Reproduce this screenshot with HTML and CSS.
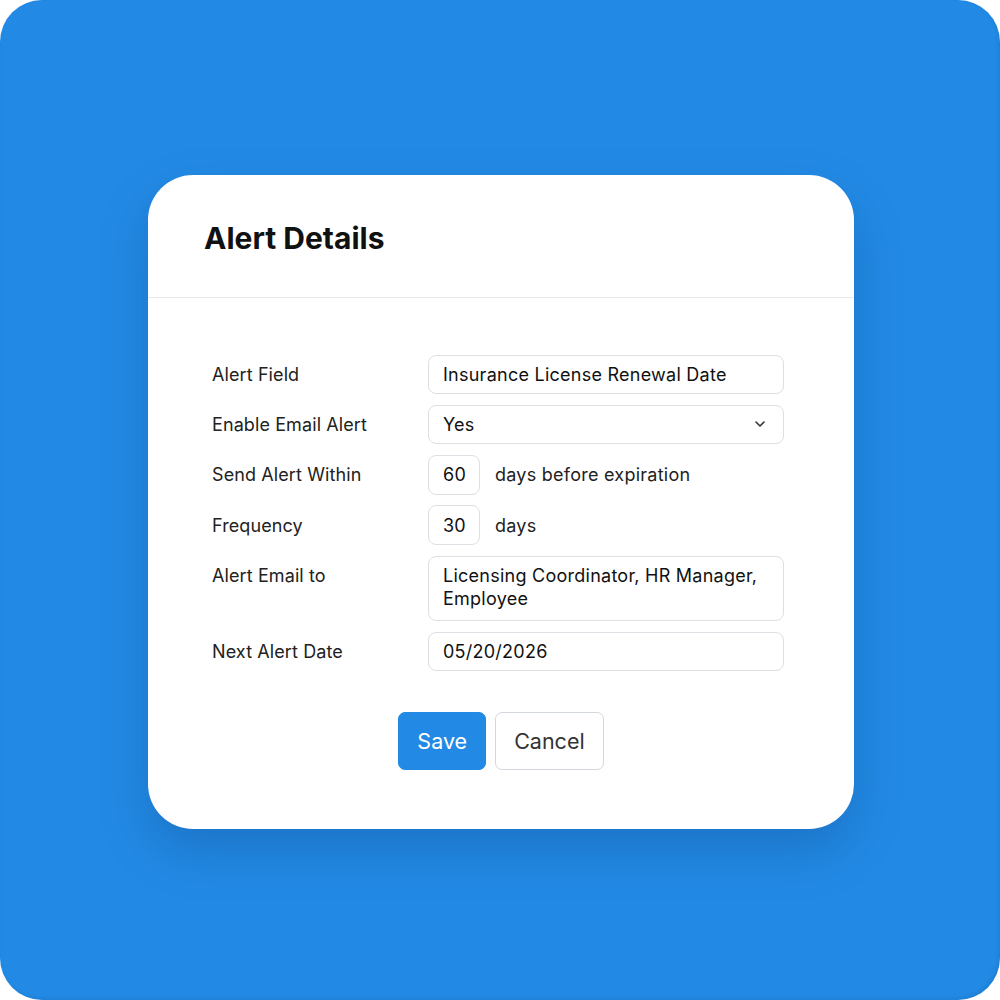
FILE: index.html
```html
<!DOCTYPE html>
<html lang="en">
<head>
<meta charset="utf-8">
<title>Alert Details</title>
<link rel="stylesheet" href="styles.css">
</head>
<body>
<div class="frame">
  <div class="card">
    <div class="card-header">
      <h1 class="title">Alert Details</h1>
    </div>
    <div class="card-body">
      <div class="form">
        <div class="row">
          <div class="label">Alert Field</div>
          <div class="field">Insurance License Renewal Date</div>
        </div>
        <div class="row">
          <div class="label">Enable Email Alert</div>
          <div class="field select">
            <span>Yes</span>
            <svg class="chevron" width="10" height="6" viewBox="0 0 10 6"><path d="M1 1l4 4 4-4" fill="none" stroke="#333" stroke-width="1.6" stroke-linecap="round" stroke-linejoin="round"/></svg>
          </div>
        </div>
        <div class="row">
          <div class="label">Send Alert Within</div>
          <div class="inline">
            <div class="field small">60</div>
            <span class="suffix">days before expiration</span>
          </div>
        </div>
        <div class="row">
          <div class="label">Frequency</div>
          <div class="inline">
            <div class="field small">30</div>
            <span class="suffix">days</span>
          </div>
        </div>
        <div class="row top">
          <div class="label">Alert Email to</div>
          <div class="field area">Licensing Coordinator, HR Manager, Employee</div>
        </div>
        <div class="row">
          <div class="label">Next Alert Date</div>
          <div class="field">05/20/2026</div>
        </div>
      </div>
      <div class="actions">
        <button class="btn primary">Save</button>
        <button class="btn secondary">Cancel</button>
      </div>
    </div>
  </div>
</div>
</body>
</html>
```

FILE: styles.css
```css
* { box-sizing: border-box; }
html, body { margin: 0; padding: 0; background: #ffffff; }
body { font-family: Inter, "Noto Sans", sans-serif; }

.frame {
  width: 1000px;
  height: 1000px;
  background: #228ae5;
  border-radius: 42px;
  padding: 175px 0 0 148px;
  box-shadow: inset -2px -2px 4px rgba(0, 0, 0, 0.08);
}

.card {
  width: 706px;
  height: 654px;
  background: #ffffff;
  border-radius: 45px;
  box-shadow: 0 22px 50px rgba(10, 40, 90, 0.22);
  display: flex;
  flex-direction: column;
}

.card-header {
  height: 123px;
  padding: 4px 56px 0;
  display: flex;
  align-items: center;
  border-bottom: 1px solid #e6e8eb;
}

.title {
  margin: 0;
  font-size: 30px;
  font-weight: 700;
  color: #111111;
}

.card-body {
  padding: 57px 70px 0 64px;
}

.form {
  display: flex;
  flex-direction: column;
  gap: 10.8px;
}

.row {
  display: flex;
  align-items: center;
}
.row.top { align-items: flex-start; }
.row.top .label { padding-top: 9px; }

.label {
  width: 216px;
  flex: none;
  font-size: 18px;
  letter-spacing: 0.1px;
  color: #222222;
}

.field {
  flex: 1;
  height: 39px;
  border: 1px solid #dcdfe4;
  border-radius: 8px;
  padding: 0 14px;
  display: flex;
  align-items: center;
  font-size: 18px;
  letter-spacing: 0.25px;
  color: #111111;
}

.select { justify-content: space-between; padding-right: 18px; }
.chevron { display: block; }

.inline {
  flex: 1;
  display: flex;
  align-items: center;
  gap: 15px;
}
.field.small {
  flex: none;
  width: 52px;
  height: 40px;
}
.suffix { font-size: 18px; letter-spacing: 0.25px; color: #222222; }

.field.area {
  height: 65px;
  display: block;
  padding: 7px 14px;
  line-height: 23px;
}

.actions {
  margin-top: 41px;
  display: flex;
  justify-content: center;
  gap: 9px;
  padding-left: 6px;
}

.btn {
  font-family: Inter, "Noto Sans", sans-serif;
  font-size: 21.5px;
  height: 58px;
  padding: 0 18px;
  border-radius: 7px;
  cursor: pointer;
}
.btn.primary {
  background: #228ae5;
  border: 1px solid #228ae5;
  color: #ffffff;
}
.btn.secondary {
  background: #ffffff;
  border: 1.5px solid #d3d8de;
  color: #333333;
}
```
